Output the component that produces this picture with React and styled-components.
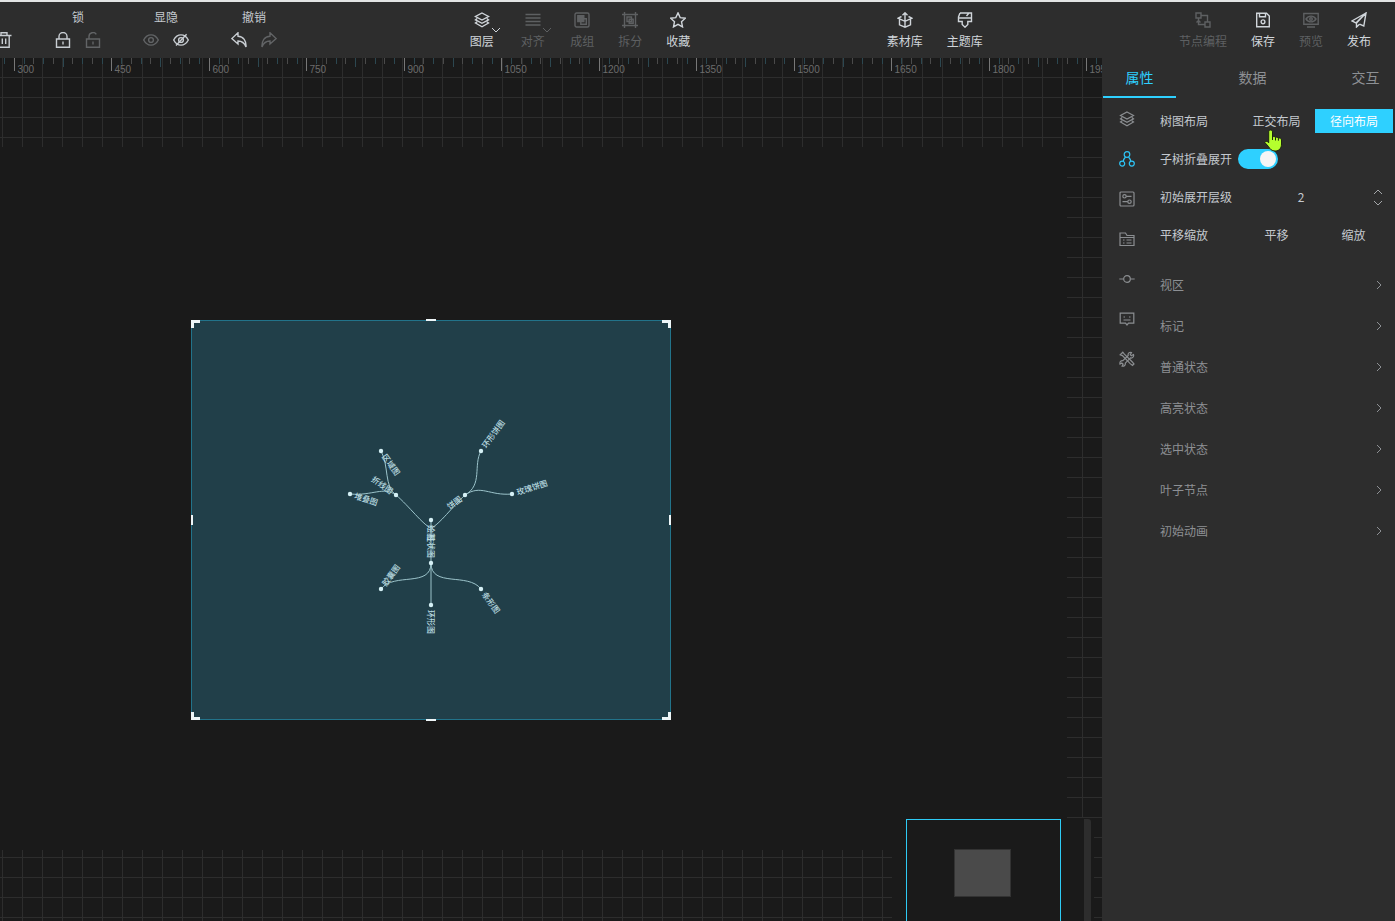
import React, { useState } from 'react';
import styled, { createGlobalStyle } from 'styled-components';

const GlobalStyle = createGlobalStyle`
  * {
    box-sizing: border-box;
  }
  body {
    margin: 0;
    background: #1a1a1a;
    color: #c4c9cf;
    font-family: 'Noto Sans CJK SC', sans-serif;
    font-size: 12px;
    line-height: 16px;
    overflow: hidden;
  }
  button,
  input {
    margin: 0;
    padding: 0;
    border: 0;
    background: none;
    color: inherit;
    font: inherit;
  }
  button {
    cursor: pointer;
  }
`;

const icons = {
  trash: <path d="M0.5 3.5h15M5 3V.8h6V3M2.8 3.5v11.7h10.4V3.5M6.3 6.5v5.5M9.7 6.5v5.5" />,
  lock: <path d="M1.5 7h13v8.3h-13zM4 7V4.5a4 4 0 0 1 8 0V7M8 9.5v3" />,
  unlock: <path d="M1.5 7h13v8.3h-13zM4 7V4.5a4 4 0 0 1 7.3-2.2M8 9.5v3" />,
  eye: (
    <>
      <path d="M.7 8C4.2 1.2 11.8 1.2 15.3 8 11.8 14.8 4.2 14.8.7 8z" />
      <circle cx="8" cy="8" r="2.4" />
    </>
  ),
  eyeOff: (
    <>
      <path d="M.7 8C4.2 1.2 11.8 1.2 15.3 8 11.8 14.8 4.2 14.8.7 8zM3 13.5L13.6 2.2" />
      <circle cx="8" cy="8" r="2.4" />
    </>
  ),
  undo: <path d="M7 .8L.8 6.6 7 12V9c4 0 6.5 2 8 6 .4-6-2.5-10.5-8-10.800z" />,
  redo: <path d="M9 .8l6.2 5.8L9 12V9c-4 0-6.5 2-8 6-.4-6 2.5-10.500 8-10.800z" />,
  layers: <path d="M8 1l6.5 3.5L8 8 1.5 4.5zM3.2 6.5L1.5 7.8 8 11.3l6.5-3.5-1.7-1.3M3.2 9.8L1.5 11 8 14.8l6.5-3.8-1.7-1.2" />,
  align: <path d="M.5 2.500h15M.5 6h15M.5 9.500h15M.5 13h15" />,
  group: (
    <>
      <rect x="1" y="1" width="14" height="14" rx="1.5" />
      <path d="M3.8 3.8h6v5.8h-6z" fill="currentColor" />
      <path d="M6.8 6.8h5.5v5.5H6.800z" />
    </>
  ),
  split: (
    <>
      <path d="M2.5 2.500h11v11h-11zM2.500 0v5M0 2.500h5M13.500 0v5M11 2.500h5M2.500 11v5M0 13.500h5M13.500 11v5M11 13.500h5" />
      <path d="M5 5h4.500v4.500H5zM7.200 7.200h4v4h-4z" />
    </>
  ),
  star: <path d="M8 .9l2.2 4.7 5.1.6-3.8 3.5 1 5.2L8 12.4l-4.5 2.5 1-5.2L.7 6.2l5.1-.6z" />,
  material: <path d="M8 9V1M5.5 3.3L8 .8l2.500 2.500M4.500 4.500L1 6.200 8 9.300l7-3.100-3.500-1.700M2.500 7.200v5.600L8 15.200l5.500-2.400V7.200M8 9.500v5.500" />,
  theme: <path d="M3 1h11.500v8.500h-3.700v3L8 15.200l-2.800-2.700v-3H1.500V5L3 1M1.500 6h13M9.500 4l2.500-3" />,
  node: <path d="M1 1h5v5H1zM10 10h5v5h-5zM6 3.500h6.500V10M3.500 6v6.500H10M3.500 8.500l-2 2M3.500 8.500l2 2" />,
  save: (
    <>
      <path d="M1.7 1.300h9.800l2.800 2.800v10.600H1.700zM4.500 1.500v3.300h6V1.500" />
      <circle cx="8" cy="9.8" r="1.9" />
    </>
  ),
  preview: (
    <>
      <path d="M.8 1.500h14.400v10.800H.8zM4 15h8M3 7c2.500-3.800 7.500-3.800 10 0-2.500 3.800-7.500 3.800-10 0z" />
      <circle cx="8" cy="7" r="1.3" />
    </>
  ),
  send: <path d="M15 1L.9 9l4 2L15 1l-2.200 13-4.300-1.800M15 1L5.500 11v4l3-2.800" />,
  tree: (
    <>
      <circle cx="8" cy="3.5" r="2.8" />
      <circle cx="3.2" cy="12.6" r="2.5" />
      <circle cx="12.8" cy="12.6" r="2.5" />
      <path d="M6.500 6C5.500 7 4.500 8.500 4.200 10.300M9.500 6c1 1 2 2.500 2.300 4.300" />
    </>
  ),
  sliders: (
    <>
      <rect x="1" y="1" width="14" height="14" rx="1" />
      <circle cx="5.5" cy="5.3" r="1.7" />
      <circle cx="10.5" cy="10.7" r="1.7" />
      <path d="M7.200 5.300h5.300M3.500 10.700h5.300" />
    </>
  ),
  folder: <path d="M1 14.500V2h5.500L8 4.500h7v10zM1 6.500h14M4 9h1.500M7.500 9h5M4 12h1.500M7.500 12h5" />,
  commit: (
    <>
      <circle cx="8" cy="8" r="3.3" />
      <path d="M.3 8h4.400M11.300 8h4.400" />
    </>
  ),
  comment: <path d="M1.200 2.200h13.600v10H9.500L8 14l-1.500-1.800H1.200zM4.500 6h1.500M10 6h1.500M4.500 9h7" />,
  tools: (
    <>
      <path d="M3.800 1.200L1.200 3.800l2.200.8 7.800 8 2.300 1.900 1.500-1.500-1.900-2.300-8-7.800z" />
      <path d="M14.500 3.500l-2.200 1.200-1-1 1.200-2.200c-2-.7-3.900.8-3.300 3L3.900 9.600c-2-.3-3.400 1.500-2.900 3.400l1.800-1 1.300 1.200-1 1.900c2 .4 3.600-1 3.200-3l5.200-5.200c2 .6 3.700-1.300 3-3.400z" />
    </>
  ),
};

const Svg = styled.svg`
  display: block;
  flex: none;
  fill: none;
  stroke: currentColor;
  stroke-width: ${(p) => p.$weight || 1.4};
`;

const Icon = ({ name, size = 16, weight }) => (
  <Svg viewBox="0 0 16 16" width={size} height={size} $weight={weight} aria-hidden="true">
    {icons[name]}
  </Svg>
);

const Chevron = ({ d, width = 10, height = 6 }) => (
  <Svg viewBox={`0 0 ${width} ${height}`} width={width} height={height} $weight={1} aria-hidden="true">
    <path d={d} />
  </Svg>
);

const DOWN = 'M1 1l4 4 4-4';
const UP = 'M1 5l4-4 4 4';

const Page = styled.div`
  display: flex;
  flex-direction: column;
  height: 100vh;
`;

const Toolbar = styled.header`
  display: flex;
  justify-content: space-between;
  flex: none;
  height: 58px;
  padding-right: 12px;
  border-top: 2px solid #e2e4e4;
  background: #2d2d2d;
  overflow: hidden;
`;

const ToolSection = styled.div`
  display: flex;
  gap: ${(p) => p.$gap || 0}px;
`;

const ToolGroup = styled.div`
  width: 60px;
  padding-top: 7px;
  text-align: center;
`;

const IconRow = styled.div`
  display: flex;
  justify-content: space-around;
  padding-top: 7px;
`;

const IconButton = styled.button`
  color: ${(p) => (p.$dim ? '#626466' : '#c8cdd2')};
`;

const TrashSlot = styled.div`
  display: flex;
  align-items: flex-end;
  width: 24px;
  margin: 0 0 10px -4px;
`;

const ToolButton = styled.button`
  position: relative;
  display: flex;
  flex-direction: column;
  align-items: center;
  gap: 5px;
  width: ${(p) => p.$width || 48}px;
  padding-top: 10px;
  color: ${(p) => (p.$dim ? '#5e6062' : '#d0d5da')};
  white-space: nowrap;
`;

const Caret = styled.span`
  position: absolute;
  top: 25px;
  right: 6px;
`;

const Body = styled.div`
  display: flex;
  flex: 1;
  min-height: 0;
`;

const Workspace = styled.main`
  position: relative;
  display: flex;
  flex-direction: column;
  flex: 1;
  min-width: 0;
  overflow: hidden;
  background-color: #1a1a1a;
  background-image: linear-gradient(to right, #2d2d2d 1px, transparent 1px),
    linear-gradient(to bottom, #2d2d2d 1px, transparent 1px);
  background-size: 20px 20px;
  background-position: 2px 19px;
`;

const RulerSvg = styled.svg`
  display: block;
  flex: none;
  width: 100%;
  height: 18px;
  margin-bottom: 71px;
  text {
    fill: #6c6c6c;
    font: 10px 'Liberation Sans', sans-serif;
  }
`;

const Stage = styled.div`
  position: relative;
  flex: 1;
  margin: 0 35px 71px 0;
  background: #1a1a1a;
`;

const Artboard = styled.svg`
  position: absolute;
  left: 191px;
  top: 173px;
  width: 480px;
  height: 400px;
  overflow: visible;
  text {
    fill: #b9dbe0;
    font-size: 8px;
    font-weight: 500;
  }
`;

const MiniMapArea = styled.div`
  position: absolute;
  right: 8px;
  bottom: 0;
  display: flex;
  justify-content: space-between;
  width: 202px;
  height: 103px;
  padding: 1px 3px 0 14px;
  background: #1a1a1a;
`;

const MiniMap = styled.div`
  width: 155px;
  padding: 29px 0 0 47px;
  border: 1px solid #2ecbf5;
  border-bottom: 0;
`;

const MiniViewport = styled.div`
  width: 57px;
  height: 48px;
  border: 1px solid #333;
  background: #4a4a4a;
`;

const ScrollThumb = styled.div`
  width: 7px;
  border-radius: 0 3px 0 0;
  background: #2d2d2d;
`;

const Panel = styled.aside`
  flex: none;
  width: 293px;
  padding-left: 1px;
  background: #2d2d2d;
  overflow: hidden;
`;

const Tabs = styled.nav`
  display: flex;
  gap: 40px;
`;

const Tab = styled.button`
  flex: none;
  width: 73px;
  height: 40px;
  border-bottom: 2px solid ${(p) => (p.$active ? '#2ed0ff' : 'transparent')};
  color: ${(p) => (p.$active ? '#2ed0ff' : '#8d9094')};
  font-size: 14px;
`;

const PanelBody = styled.div`
  display: flex;
`;

const SideNav = styled.nav`
  display: flex;
  flex-direction: column;
  flex: none;
  width: 57px;
  padding-top: 1px;
`;

const SideButton = styled.button`
  display: flex;
  align-items: center;
  justify-content: center;
  width: 48px;
  height: 40px;
  color: ${(p) => (p.$active ? '#2ec4f5' : '#8b8e91')};
`;

const Form = styled.form`
  flex: 1;
  padding-top: 4px;
`;

const Field = styled.div`
  display: flex;
  align-items: center;
  height: 38px;
`;

const Label = styled.label`
  flex: none;
  width: 78px;
`;

const Choice = styled.button`
  flex: none;
  width: ${(p) => (p.$active ? 78 : 77)}px;
  height: 24px;
  background: ${(p) => (p.$active ? '#2ed0ff' : 'transparent')};
  color: ${(p) => (p.$active ? '#fff' : 'inherit')};
`;

const Switch = styled.input`
  appearance: none;
  width: 40px;
  height: 20px;
  border-radius: 10px;
  background: #555;
  cursor: pointer;
  &::before {
    content: '';
    display: block;
    width: 16px;
    height: 16px;
    margin: 2px;
    border-radius: 50%;
    background: #f5f5f5;
  }
  &:checked {
    background: #2ed0ff;
  }
  &:checked::before {
    margin-left: 22px;
  }
`;

const NumberInput = styled.input`
  width: 126px;
  text-align: center;
`;

const Stepper = styled.div`
  display: flex;
  flex-direction: column;
  gap: 5px;
  margin-left: 9px;
  color: #a4a7aa;
  button {
    display: block;
  }
`;

const Groups = styled.div`
  padding-top: 10px;
`;

const GroupButton = styled.button`
  display: flex;
  align-items: center;
  justify-content: space-between;
  width: 100%;
  height: 41px;
  padding-right: 13px;
  color: #8d9094;
`;

const HandCursor = styled.svg`
  position: absolute;
  left: 1264px;
  top: 129px;
  pointer-events: none;
`;

const tools = [
  { icon: 'layers', label: '图层', caret: true },
  { icon: 'align', label: '对齐', caret: true, dim: true },
  { icon: 'group', label: '成组', dim: true },
  { icon: 'split', label: '拆分', dim: true },
  { icon: 'star', label: '收藏' },
];

const libraries = [
  { icon: 'material', label: '素材库', width: 60 },
  { icon: 'theme', label: '主题库', width: 60 },
];

const actions = [
  { icon: 'node', label: '节点编程', width: 72, dim: true },
  { icon: 'save', label: '保存' },
  { icon: 'preview', label: '预览', dim: true },
  { icon: 'send', label: '发布' },
];

const toggles = [
  { title: '锁', on: 'lock', off: 'unlock', names: ['锁定', '解锁'], dim: 1 },
  { title: '显隐', on: 'eye', off: 'eyeOff', names: ['显示', '隐藏'], dim: 0 },
  { title: '撤销', on: 'undo', off: 'redo', names: ['撤销', '重做'], dim: 1 },
];

const sideItems = [
  ['layers', '图层'],
  ['tree', '树图'],
  ['sliders', '设置'],
  ['folder', '资源'],
  ['commit', '节点'],
  ['comment', '提示'],
  ['tools', '工具'],
];

const groups = ['视区', '标记', '普通状态', '高亮状态', '选中状态', '叶子节点', '初始动画'];

const nodes = [
  { x: 240, y: 200, label: '绘图', angle: 90 },
  { x: 205, y: 175, label: '折线图', angle: 36, end: true },
  { x: 274, y: 175, label: '饼图', angle: -36, end: true },
  { x: 240, y: 243, label: '柱状图', angle: 90, end: true },
  { x: 190, y: 131, label: '区域图', angle: 54 },
  { x: 159, y: 174, label: '堆叠图', angle: 18 },
  { x: 290, y: 131, label: '环形饼图', angle: -54 },
  { x: 321, y: 174, label: '玫瑰饼图', angle: -18 },
  { x: 190, y: 269, label: '胶囊图', angle: -54 },
  { x: 240, y: 285, label: '环形图', angle: 90 },
  { x: 290, y: 269, label: '条形图', angle: 54 },
];

const links = [
  'M240 200V285',
  'M240 208C232 205 218 186 205 175',
  'M240 208C248 205 262 186 274 175',
  'M205 175C193 167 198 145 190 131',
  'M205 175C192 166 182 176 159 174',
  'M274 175C292 165 282 145 290 131',
  'M274 175C290 164 298 176 321 174',
  'M240 243C240 268 203 252 190 269',
  'M240 243C240 268 277 252 290 269',
];

const Tool = ({ icon, label, caret, dim, width }) => (
  <ToolButton type="button" $dim={dim} $width={caret ? 51 : width}>
    <Icon name={icon} />
    {label}
    {caret && (
      <Caret>
        <Chevron d={DOWN} />
      </Caret>
    )}
  </ToolButton>
);

const Ruler = () => {
  const ticks = Array.from({ length: 113 }, (_, i) => i - 1);
  return (
    <RulerSvg>
      {ticks.map((i) => {
        const x = Math.floor(14.3 + i * 9.75) + 0.5;
        const major = i % 10 === 0;
        const length = major ? 13 : i % 5 === 0 ? 9 : 6;
        const color = major ? '#777' : i % 2 ? '#2c4750' : '#4a4a4a';
        return (
          <g key={i}>
            <path d={`M${x} 0v${length}`} stroke={color} />
            {major && (
              <text x={x + 3} y="15">
                {300 + i * 15}
              </text>
            )}
          </g>
        );
      })}
    </RulerSvg>
  );
};

const TreeArtboard = () => (
  <Artboard viewBox="0 0 480 400">
    <rect x="0.5" y="0.5" width="479" height="399" fill="#213f49" stroke="#22738a" />
    <g fill="none" stroke="#9cc4cb">
      {links.map((d) => (
        <path key={d} d={d} />
      ))}
    </g>
    {nodes.map(({ x, y, label, angle, end }) => (
      <g key={label} transform={`translate(${x} ${y})`}>
        <circle r="2.2" fill="#d5f0f5" />
        <text x={end ? -5 : 5} y="3" textAnchor={end ? 'end' : 'start'} transform={`rotate(${angle})`}>
          {label}
        </text>
      </g>
    ))}
    <path
      d="M1.5 8V1.500H9M471 1.500h7.500V8M1.500 392v6.500H9M471 398.500h7.500V392"
      fill="none"
      stroke="#eef6f8"
      strokeWidth="3"
    />
    <path
      d="M235 0h10M235 400h10M1 195v10M479 195v10"
      stroke="#eef6f8"
      strokeWidth="2"
    />
  </Artboard>
);

const App = () => {
  const [layout, setLayout] = useState('径向布局');
  const [level, setLevel] = useState(2);

  return (
    <Page>
      <GlobalStyle />
      <Toolbar>
        <ToolSection $gap={28}>
          <TrashSlot>
            <IconButton type="button" aria-label="删除">
              <Icon name="trash" />
            </IconButton>
          </TrashSlot>
          {toggles.map(({ title, on, off, names, dim }) => (
            <ToolGroup key={title}>
              {title}
              <IconRow>
                <IconButton type="button" aria-label={names[0]} $dim={dim === 0}>
                  <Icon name={on} />
                </IconButton>
                <IconButton type="button" aria-label={names[1]} $dim={dim === 1}>
                  <Icon name={off} />
                </IconButton>
              </IconRow>
            </ToolGroup>
          ))}
        </ToolSection>
        {[tools, libraries, actions].map((section) => (
          <ToolSection key={section[0].label}>
            {section.map((tool) => (
              <Tool key={tool.label} {...tool} />
            ))}
          </ToolSection>
        ))}
      </Toolbar>
      <Body>
        <Workspace>
          <Ruler />
          <Stage>
            <TreeArtboard />
          </Stage>
          <MiniMapArea>
            <MiniMap>
              <MiniViewport />
            </MiniMap>
            <ScrollThumb />
          </MiniMapArea>
        </Workspace>
        <Panel>
          <Tabs>
            <Tab type="button" $active>
              属性
            </Tab>
            <Tab type="button">数据</Tab>
            <Tab type="button">交互</Tab>
          </Tabs>
          <PanelBody>
            <SideNav>
              {sideItems.map(([name, label]) => (
                <SideButton key={name} type="button" aria-label={label} $active={name === 'tree'}>
                  <Icon name={name} weight={1.2} />
                </SideButton>
              ))}
            </SideNav>
            <Form onSubmit={(e) => e.preventDefault()}>
              <Field>
                <Label as="span">树图布局</Label>
                {['正交布局', '径向布局'].map((name) => (
                  <Choice
                    key={name}
                    type="button"
                    $active={layout === name}
                    onClick={() => setLayout(name)}
                  >
                    {name}
                  </Choice>
                ))}
              </Field>
              <Field>
                <Label htmlFor="collapse">子树折叠展开</Label>
                <Switch id="collapse" type="checkbox" defaultChecked />
              </Field>
              <Field>
                <Label htmlFor="level">初始展开层级</Label>
                <NumberInput
                  id="level"
                  inputMode="numeric"
                  value={level}
                  onChange={(e) => setLevel(Number(e.target.value) || 0)}
                />
                <Stepper>
                  <button type="button" aria-label="增加" onClick={() => setLevel(level + 1)}>
                    <Chevron d={UP} />
                  </button>
                  <button type="button" aria-label="减少" onClick={() => setLevel(level - 1)}>
                    <Chevron d={DOWN} />
                  </button>
                </Stepper>
              </Field>
              <Field>
                <Label as="span">平移缩放</Label>
                <Choice type="button">平移</Choice>
                <Choice type="button">缩放</Choice>
              </Field>
              <Groups>
                {groups.map((name) => (
                  <GroupButton key={name} type="button">
                    {name}
                    <Chevron d="M1 1l4 4-4 4" width={6} height={10} />
                  </GroupButton>
                ))}
              </Groups>
            </Form>
          </PanelBody>
        </Panel>
      </Body>
      <HandCursor width="20" height="23" viewBox="0 0 20 23" aria-hidden="true">
        <path
          d="M6.5 1c1.300 0 2 .8 2 2v5c1-.8 2.500-.5 3 .5 1-.7 2.400-.3 2.900.7 1.600-.5 3.100.3 3.100 1.800V15c0 4-2 7-6.300 7-3.700 0-5.200-2-6.700-4.500L.8 13.500c.5-1.500 2.500-1.500 3.900.2V3c0-1.200.7-2 1.800-2z"
          fill="#b5ff2e"
          stroke="#1d2410"
        />
        <path d="M8.500 8v3M11.500 8.500v3M14.400 9.200v2.500" stroke="#1d2410" />
      </HandCursor>
    </Page>
  );
};

export default App;
